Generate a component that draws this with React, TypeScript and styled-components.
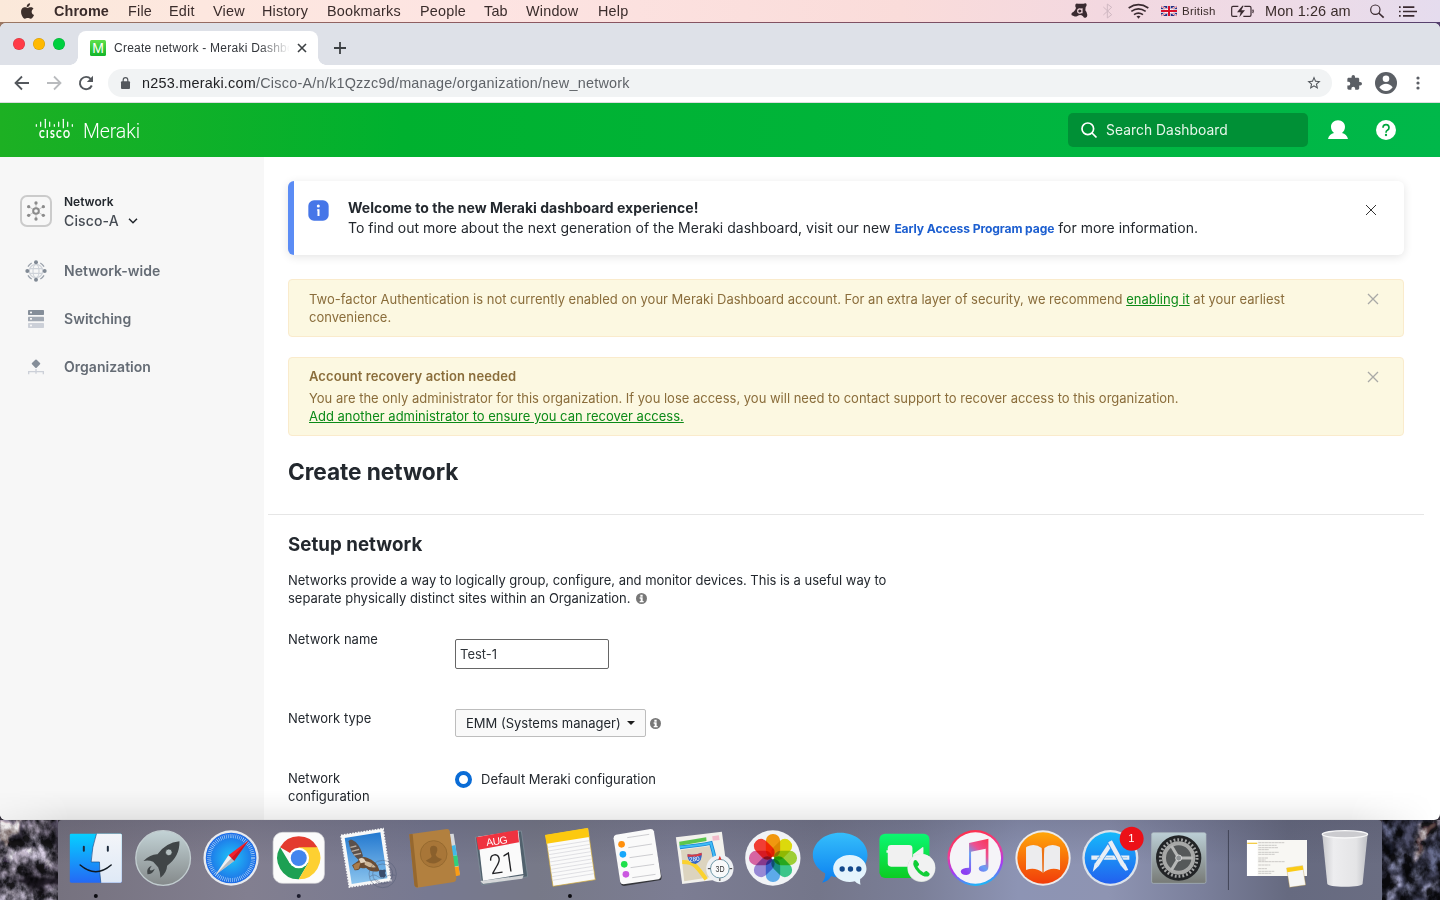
import React from 'react';
import styled, { createGlobalStyle } from 'styled-components';

const Global = createGlobalStyle`
  * { box-sizing: border-box; }
  body { margin: 0; overflow: hidden; background: #3a3440; }
  svg { display: block; overflow: visible; flex: none; }
`;

const sys = `'Liberation Sans', Arial, sans-serif`;

const Desktop = styled.div`
  width: 1440px;
  height: 900px;
  display: flex;
  flex-direction: column;
  background: linear-gradient(90deg, #9a7763, #8a5560 40%, #6e4a66 90%, #54406e) top / 100% 30px no-repeat, #35313b;
  font-family: ${sys};
`;

/* ---------- macOS menu bar ---------- */
const MenuBar = styled.div`
  height: 22px;
  margin-bottom: 1px;
  display: flex;
  align-items: center;
  background: linear-gradient(90deg, #fbe9da 0, #fde7df 200px, #fde4e2 480px, #fadcda 900px, #f3d8e0 1100px, #eddbe7 1300px, #e5dcee 1440px);
  color: #3a2c2b;
`;
const AppleSlot = styled.div`
  width: 54px;
  padding-left: 21px;
`;
const MenuItem = styled.span<{ $w: number; $bold?: boolean }>`
  width: ${(p) => p.$w}px;
  font-size: 14.4px;
  letter-spacing: ${(p) => (p.$bold ? 0.1 : 0.2)}px;
  line-height: 22px;
  white-space: nowrap;
  font-weight: ${(p) => (p.$bold ? 700 : 400)};
`;
const Status = styled.div`
  margin-left: auto;
  width: 369px;
  display: flex;
  align-items: center;
`;
const StatusItem = styled.div<{ $w: number }>`
  width: ${(p) => p.$w}px;
  flex: none;
  white-space: nowrap;
  line-height: 18px;
`;
const Lang = styled.span`
  display: block;
  font-size: 11.5px;
  letter-spacing: 0.25px;
`;
const Clock = styled.span`
  font-size: 14.5px;
  letter-spacing: 0.1px;
`;

/* ---------- Browser window ---------- */
const BrowserWindow = styled.div`
  position: relative;
  height: 797px;
  display: flex;
  flex-direction: column;
  border-radius: 6px;
  overflow: hidden;
  background: #fff;
`;
const DockShade = styled.div`
  position: absolute;
  left: 0;
  right: 0;
  bottom: 0;
  height: 30px;
  background: linear-gradient(180deg, rgba(0, 0, 0, 0), rgba(0, 0, 0, 0.03) 50%, rgba(0, 0, 0, 0.08) 97%, rgba(0, 0, 0, 0.16));
  mask-image: linear-gradient(90deg, rgba(0, 0, 0, 0.3), #000 70px, #000 1350px, transparent 1435px);
`;
const TabStrip = styled.div`
  height: 42px;
  display: flex;
  align-items: flex-end;
  background: #dee1e8;
`;
const Lights = styled.div`
  width: 78px;
  height: 42px;
  display: flex;
  align-items: center;
  gap: 8px;
  padding-left: 13px;
`;
const Light = styled.i<{ $c: string }>`
  width: 12px;
  height: 12px;
  border-radius: 50%;
  background: ${(p) => p.$c};
  box-shadow: inset 0 0 0 0.5px rgba(0, 0, 0, 0.18);
`;
const Tab = styled.div`
  position: relative;
  width: 240px;
  height: 34px;
  padding: 0 10px 0 12px;
  display: flex;
  align-items: center;
  background: #fff;
  border-radius: 8px 8px 0 0;
  &::before, &::after {
    content: '';
    position: absolute;
    bottom: 0;
    width: 8px;
    height: 8px;
  }
  &::before { left: -8px; background: radial-gradient(circle at 0 0, transparent 7.5px, #fff 8px); }
  &::after { right: -8px; background: radial-gradient(circle at 100% 0, transparent 7.5px, #fff 8px); }
`;
const Favicon = styled.div`
  width: 16px;
  height: 16px;
  margin-right: 8px;
  border-radius: 1.5px;
  background: linear-gradient(#5ee04a, #12b52a);
  color: #fff;
  font: 400 14px/16px ${sys};
  text-align: center;
`;
const TabTitle = styled.span`
  width: 175px;
  margin-right: 9px;
  overflow: hidden;
  white-space: nowrap;
  font-size: 12px;
  line-height: 18px;
  letter-spacing: 0.24px;
  color: #33363b;
  mask-image: linear-gradient(90deg, #000 145px, transparent 176px);
`;
const NewTab = styled.div`
  height: 34px;
  padding: 0 0 0 16px;
  display: flex;
  align-items: center;
`;
const Toolbar = styled.div`
  height: 38px;
  display: flex;
  align-items: center;
  padding: 0 18px 2px 14px;
  border-bottom: 1px solid #dcdde0;
  background: #fff;
`;
const NavIcons = styled.div`
  width: 94px;
  display: flex;
  gap: 16px;
`;
const UrlField = styled.div`
  width: 1224px;
  height: 28px;
  border-radius: 14px;
  background: #f1f3f4;
  display: flex;
  align-items: center;
  padding: 0 10px 0 13px;
`;
const Url = styled.span`
  margin-left: 12px;
  flex: 1;
  font-size: 14.4px;
  letter-spacing: 0.24px;
  color: #5f6368;
  b { font-weight: 400; color: #202124; }
`;
const Extensions = styled.div`
  flex: 1;
  display: flex;
  align-items: center;
  padding-left: 15px;
`;
const Avatar = styled.div`
  margin: 0 19px 0 13px;
`;

/* ---------- Meraki header ---------- */
const Header = styled.header`
  height: 54px;
  flex: none;
  display: flex;
  align-items: center;
  padding: 0 44px 0 35px;
  background: linear-gradient(90deg, #1db023, #00b12f 28%, #00b53c 65%, #00b84a);
  color: #fff;
`;
const CiscoLogo = styled.div`
  margin-bottom: 3px;
`;
const Brand = styled.span`
  margin-left: 9px;
  flex: 1;
  font: 300 19.5px/26px Roboto, sans-serif;
  letter-spacing: -0.1px;
  padding-top: 4px;
`;
const SearchBox = styled.div`
  width: 240px;
  height: 34px;
  margin-right: 20px;
  border-radius: 5px;
  background: #009036;
  display: flex;
  align-items: center;
  padding-left: 13px;
  gap: 9px;
  font: 400 13.8px/20px Inter, sans-serif;
  letter-spacing: 0.06px;
  color: #e6f6ea;
`;
const HeaderIcon = styled.div`
  width: 20px;
  margin-right: 28px;
  &:last-child { margin-right: 0; }
`;

/* ---------- Page body ---------- */
const Body = styled.div`
  flex: 1;
  display: flex;
  font-family: Inter, sans-serif;
`;
const Sidebar = styled.nav`
  width: 264px;
  flex: none;
  background: #f7f7f7;
  padding: 35px 0 0 20px;
`;
const OrgPicker = styled.div`
  height: 43px;
  margin-bottom: 12px;
  display: flex;
  gap: 12px;
`;
const OrgIcon = styled.div`
  width: 32px;
  height: 32px;
  margin-top: 3px;
  border: 2px solid #cbcbcb;
  border-radius: 7px;
  display: grid;
  place-items: center;
`;
const OrgLabel = styled.div`
  font-size: 12px;
  font-weight: 600;
  line-height: 20px;
  letter-spacing: -0.03px;
  color: #23282e;
`;
const OrgName = styled.div`
  display: flex;
  align-items: center;
  gap: 9px;
  font-size: 14px;
  font-weight: 500;
  line-height: 18px;
  letter-spacing: 0.15px;
  color: #464c54;
`;
const NavItem = styled.div`
  height: 48px;
  display: flex;
  align-items: center;
  gap: 12px;
  font-size: 14px;
  font-weight: 600;
  line-height: 18px;
  letter-spacing: 0.02px;
  color: #656c75;
`;
const NavIcon = styled.div`
  width: 32px;
  display: grid;
  place-items: center;
`;
const Main = styled.main`
  flex: 1;
  padding: 24px 36px 0 24px;
  color: #23282e;
`;
const Welcome = styled.section`
  height: 74px;
  margin-bottom: 24px;
  display: flex;
  border-radius: 6px;
  overflow: hidden;
  border-left: 6px solid #5b8cf5;
  background: #fff;
  box-shadow: 0 2px 10px rgba(0, 0, 0, 0.11);
  padding: 17px 28px 0 14px;
`;
const InfoSquare = styled.div`
  width: 21px;
  height: 21px;
  margin: 2px 19px 0 0;
`;
const WelcomeText = styled.div`
  flex: 1;
  font-size: 14px;
  line-height: 20px;
  letter-spacing: 0.02px;
  white-space: nowrap;
  strong { display: block; font-weight: 700; letter-spacing: 0.01px; }
  a { font-size: 12.1px; font-weight: 700; letter-spacing: -0.1px; color: #1d5fd0; }
`;
const CloseWrap = styled.div<{ $top: number }>`
  margin-top: ${(p) => p.$top}px;
`;
const Alert = styled.section<{ $h: number; $pad: number }>`
  height: ${(p) => p.$h}px;
  margin-bottom: 20px;
  display: flex;
  padding: ${(p) => p.$pad}px 25px 0 20px;
  border: 1px solid #faebcc;
  border-radius: 4px;
  background: #fcf8e1;
  color: #8a6d3b;
  p {
    flex: 1;
    margin: 0;
    font-size: 13px;
    line-height: 18px;
    letter-spacing: -0.005px;
    white-space: nowrap;
  }
  strong { display: block; margin-bottom: 4px; font-weight: 600; letter-spacing: 0.08px; }
  a { color: #0b8a17; text-decoration: underline; }
`;
const PageTitle = styled.h1`
  margin: 21px 0 27px;
  font-size: 22.7px;
  line-height: 30px;
  font-weight: 700;
  letter-spacing: -0.08px;
`;
const Rule = styled.hr`
  margin: 0 -20px 0;
  border: 0;
  height: 1px;
  background: #e6e6e6;
`;
const SectionTitle = styled.h2`
  margin: 17px 0 13px;
  font-size: 18.7px;
  line-height: 26px;
  font-weight: 700;
  letter-spacing: 0.03px;
`;
const Copy = styled.p`
  margin: 0;
  height: 59px;
  font-size: 13px;
  line-height: 18px;
  letter-spacing: -0.02px;
  white-space: nowrap;
  svg { display: inline-block; vertical-align: -1px; margin-left: 2px; }
`;
const FieldRow = styled.div<{ $h: number }>`
  height: ${(p) => p.$h}px;
  display: flex;
  font-size: 13px;
  line-height: 18px;
  letter-spacing: 0;
`;
const FieldLabel = styled.label`
  width: 167px;
`;
const TextInput = styled.input`
  width: 154px;
  height: 30px;
  margin-top: 9px;
  padding: 2px 4px;
  border: 1px solid #666;
  border-radius: 2px;
  font: 400 13px Inter, sans-serif;
  letter-spacing: 0;
  color: #2e3338;
`;
const SelectButton = styled.button`
  width: 191px;
  height: 28px;
  display: flex;
  align-items: center;
  justify-content: space-between;
  padding: 0 10px;
  border: 1px solid #bdbdbd;
  border-radius: 2px;
  background: #f9f9f9;
  font: 400 13px Inter, sans-serif;
  letter-spacing: 0;
  white-space: nowrap;
  color: #23282e;
`;
const InfoSlot = styled.div`
  margin: 9px 0 0 3.5px;
`;
const RadioOption = styled.div`
  height: 20px;
  display: flex;
  align-items: center;
  gap: 9px;
`;
const Radio = styled.i`
  width: 17px;
  height: 17px;
  border: 4.5px solid #0a6cd6;
  border-radius: 50%;
`;

/* ---------- Dock ---------- */
const DockRow = styled.div`
  height: 80px;
  display: flex;
`;
const DockBar = styled.div`
  width: 1324px;
  padding-left: 4.15px;
  display: flex;
  border-radius: 4px 4px 0 0;
  background:
    linear-gradient(180deg, rgba(70, 70, 90, 0.25), rgba(70, 70, 90, 0) 45px),
    linear-gradient(90deg, #76727f, #827f90 190px, #777991 370px, #777988 480px, #7c7d93 620px, #74768a 760px, #7b7f98 860px, #8d94b4 960px, #8e94b2 1050px, #7b809c 1140px, #666a80 1230px, #6a6d82);
`;

const cross = (s: number, c: string, w: number) => (
  <svg width={s} height={s} viewBox="0 0 10 10" stroke={c} strokeWidth={w}>
    <path d="M0 0L10 10M10 0L0 10" />
  </svg>
);

const InfoDot = () => (
  <svg width="11" height="11" viewBox="0 0 33 33">
    <circle cx="16.5" cy="16.5" r="16.5" fill="#777" />
    <path d="M13 5h7v6h-7zM11 13h9v11h3v4H11v-4h3v-7h-3z" fill="#fff" />
  </svg>
);

const Rocks = ({ flip }: { flip?: boolean }) => {
  const k = flip ? 'R' : 'L';
  return (
    <svg width="58" height="80" viewBox="0 0 58 80">
      <defs>
        <clipPath id={`rock${k}`}><rect width="58" height="80" /></clipPath>
        <filter id={`rough${k}`} x="-10%" y="-10%" width="120%" height="120%" colorInterpolationFilters="sRGB">
          <feTurbulence type="fractalNoise" baseFrequency="0.08" numOctaves="4" seed={flip ? 8 : 3} />
          <feDisplacementMap in="SourceGraphic" scale="18" xChannelSelector="R" yChannelSelector="G" />
          <feGaussianBlur stdDeviation="0.8" />
        </filter>
        <filter id={`grain${k}`} x="0" y="0" width="100%" height="100%" colorInterpolationFilters="sRGB">
          <feTurbulence type="fractalNoise" baseFrequency="0.09 0.07" numOctaves="4" seed={flip ? 12 : 5} />
          <feColorMatrix values="2.2 0 0 0 -0.68  2.2 0 0 0 -0.68  2.2 0 0 0 -0.66  0 0 0 0 1" />
        </filter>
      </defs>
      <g clipPath={`url(#rock${k})`}>
        {flip ? (
          <g>
            <rect width="58" height="80" fill="#2b2c3a" />
            <g filter="url(#roughR)">
              <path d="M39 0h18L46 18 38 40 28 48 32 20z" fill="#77717a" />
              <path d="M44 4l8 0-12 20-4 14-3-4 4-18z" fill="#a69a98" />
              <path d="M0 8l14-5 6 14-12 6zM48 28l14-14v30l-16 12z" fill="#3b3e50" />
              <path d="M4 38l16-10 8 6-18 20zM24 60l20-18-8 24-18 14z" fill="#484a5b" />
              <path d="M10 60l10-4-6 18-8 4zM42 70l18-16-2 10-12 14zM52 6l6 4-8 12z" fill="#5f6072" />
              <path d="M4 24l12 4-8 10zM26 46l8-2-12 22z" fill="#151722" />
            </g>
          </g>
        ) : (
          <g>
            <rect width="58" height="80" fill="#544e59" />
            <g filter="url(#roughL)">
              <path d="M0 0h20l-2 14L8 26 0 22z" fill="#a59a96" />
              <path d="M24 2l24-4-6 18-18 6zM0 28l20-6 14 10-14 22-20 2z" fill="#6a646d" />
              <path d="M24 18l18 2 14 14-24 14z" fill="#7b7680" />
              <path d="M8 30l8 2-6 16-7-2zM30 26l8 4-8 10z" fill="#8a848e" />
              <path d="M18 58l20-4 24-2v12l-30 6-12-4z" fill="#141117" />
              <path d="M0 58l24 8 14 10 24-8v18H0z" fill="#77727c" />
              <path d="M52 0h12v32l-10-6zM20 2l6 4-8 18-4-4z" fill="#2e2a34" />
              <path d="M6 70l12 2-4 6zM42 42l10-6 6 10-12 4z" fill="#857f88" />
            </g>
          </g>
        )}
        <rect width="58" height="80" filter={`url(#grain${k})`} style={{ mixBlendMode: 'overlay' }} opacity=".8" />
      </g>
    </svg>
  );
};

const DockIcon = ({ x, children }: { x: number; children: React.ReactNode }) => (
  <svg width="67.7" height="80" viewBox={`${x} 30 203.1 240`}>{children}</svg>
);

const range = (n: number) => Array.from({ length: n }, (_, i) => i);

const Gradient = ({ id, from, to }: { id: string; from: string; to: string }) => (
  <linearGradient id={id} x1="0" y1="0" x2="0" y2="1">
    <stop offset="0" stopColor={from} />
    <stop offset="1" stopColor={to} />
  </linearGradient>
);

const petals = ['#ff9f0f', '#e9e40c', '#a6d837', '#3fcf8f', '#62b3f2', '#a090dd', '#e36aa8', '#ff4136'];

const Dock = () => (
  <DockBar>
    {/* Finder */}
    <DockIcon x={186.5}>
      <defs><Gradient id="fdL" from="#06d0ff" to="#2469f5" /><Gradient id="fdR" from="#f3f5f9" to="#dfe9f6" /></defs>
      <rect x="210" y="71" width="156" height="147" rx="4" fill="url(#fdL)" />
      <path d="M290 71H362a4 4 0 014 4V214a4 4 0 01-4 4H303q-4-30-4-62H274q2-45 16-85z" fill="url(#fdR)" />
      <path d="M290 71q-14 40-16 85h25q0 32 4 62" fill="none" stroke="#174a86" strokeWidth="2" />
      <path d="M252 110v12M324 110v12" stroke="#1d2b3c" strokeWidth="6" strokeLinecap="round" />
      <path d="M241 165q47 40 93 0" fill="none" stroke="#101820" strokeWidth="4.5" strokeLinecap="round" />
      <circle cx="288" cy="258" r="6" fill="#0b0b10" />
    </DockIcon>
    {/* Launchpad */}
    <DockIcon x={389.6}>
      <defs><Gradient id="lp" from="#c3d3d6" to="#84898a" /></defs>
      <circle cx="489" cy="144" r="82" fill="url(#lp)" stroke="#c2cdd0" strokeWidth="4" />
      <path d="M538 94Q497 98 472 133Q452 132 430 153Q445 150 459 155L474 172Q480 184 481 203Q500 188 501 167Q539 140 538 94z" fill="#404547" />
      <path d="M455 167q-18 6-13 26q16 0 22-17q-10 8-15 4q0-6 6-13z" fill="#404547" />
      <circle cx="506" cy="127" r="10" fill="#b4bfc0" stroke="#2e3335" strokeWidth="2" />
    </DockIcon>
    {/* Safari */}
    <DockIcon x={592.7}>
      <defs><radialGradient id="sf"><stop offset="0" stopColor="#1fc4f8" /><stop offset="1" stopColor="#1e6be6" /></radialGradient></defs>
      <circle cx="692" cy="144" r="83" fill="#e9ebee" />
      <circle cx="692" cy="144" r="76" fill="url(#sf)" />
      <circle cx="692" cy="144" r="66" fill="none" stroke="#d6ecfc" strokeWidth="12" strokeDasharray="1.5 4.26" />
      <path d="M745 91L684 136L701 153z" fill="#f2222c" />
      <path d="M701 153L684 136L645 195z" fill="#f0f0f3" />
      <path d="M745 91L692.500 144.500L701 153z" fill="#a30d16" opacity=".5" />
      <path d="M645 195L692.500 144.500L701 153z" fill="#8b9097" opacity=".55" />
    </DockIcon>
    {/* Chrome */}
    <DockIcon x={-14.3}>
      <rect x="10" y="67" width="154" height="153" rx="28" fill="#fbfbfb" stroke="#d5d5d8" strokeWidth="2" />
      <path d="M87 144L31 112A64 64 0 01143 112z" fill="#e33b2e" />
      <path d="M31 112A64 64 0 0087 208L115 160L87 144L60 160z" fill="#1da053" />
      <path d="M87 208A64 64 0 00143 112H87V144L115 160z" fill="#fdd031" />
      <circle cx="87" cy="144" r="31" fill="#fff" />
      <circle cx="87" cy="144" r="24" fill="#4285ee" />
      <circle cx="87" cy="258" r="6" fill="#1b1b2c" />
    </DockIcon>
    {/* Mail */}
    <DockIcon x={188.9}>
      <defs><Gradient id="ml" from="#2378cf" to="#8cc5ee" /></defs>
      <path d="M213 76L339 56L362 212L238 231z" fill="#f8f8f8" stroke="#f8f8f8" strokeWidth="5" strokeDasharray="5 3.5" />
      <path d="M224 84L331 67L352 205L245 222z" fill="url(#ml)" />
      <path d="M236 94Q240 86 247 90L257 96Q273 112 279 139L266 150Q240 132 236 94z" fill="#5b504b" />
      <path d="M241 112l18-4M245 124l22-6M251 135l22-5" stroke="#b9ada2" strokeWidth="4" />
      <path d="M246 166L264 153Q272 137 291 143Q320 152 329 182Q305 190 288 173Q280 176 272 173Q266 182 254 181z" fill="#6b4c32" />
      <path d="M250 166q10-8 22-10l-6 20-12 3z" fill="#a97b4a" />
      <path d="M284 154Q300 152 318 172Q297 174 284 164z" fill="#cdb698" />
      <path d="M266 147q8-5 16-1l6 10-16 4z" fill="#e3d3bd" />
      <g fill="none" stroke="#4e5871" opacity=".5" strokeWidth="2.500">
        <circle cx="338" cy="192" r="41" /><circle cx="338" cy="192" r="30" />
        <path d="M300 200q12-10 24 0t24 0 28-4M302 214q12-10 24 0t24 0" />
      </g>
      <path d="M327 188q-2-12 10-8 12-4 10 4-5 6 1 12-5 10-11 6-9 3-10-14z" fill="#3a4c6c" />
    </DockIcon>
    {/* Contacts */}
    <DockIcon x={392}>
      <path d="M538 72l12-1 18 122-14 6z" fill="#d6dade" />
      <path d="M542 108l13-3 5 30-13 3z" fill="#42b8e8" />
      <path d="M546 138l15-2 4 31-14 3z" fill="#30d07c" />
      <path d="M550 172l15-3 4 27-14 3z" fill="#fb9d14" />
      <path d="M417 73L530 57Q537 57 538 64L558 205Q558 214 551 216L440 233Q433 231 432 224z" fill="#b2803f" />
      <path d="M417 73L427 72L443 232Q433 232 432 224z" fill="#96682f" />
      <circle cx="490" cy="132" r="40" fill="#a87638" stroke="#96692f" strokeWidth="3" />
      <path d="M479 117q1-11 12-10 11 1 10 14-2 9-5 13 2 8 19 13-23 24-49 5 17-8 18-13-5-9-5-22z" fill="#8a602c" />
    </DockIcon>
    {/* Calendar */}
    <DockIcon x={595}>
      <path d="M617 82L755 63L774 200L637 225z" fill="#51616d" stroke="#8796a0" strokeWidth="2" />
      <path d="M632 213L762 196L758 206L640 222z" fill="#d6d8da" />
      <path d="M625 80L746 62L761 192L640 212z" fill="#fafafa" />
      <path d="M620 82L744 60L748 97L626 119z" fill="#ef3340" />
      <g transform="rotate(-8 690 130)" textAnchor="middle">
        <text x="687" y="103" fontFamily="Liberation Sans" fontSize="31" fill="#fff" textLength="64">AUG</text>
        <text x="694" y="189" fontFamily="Roboto" fontSize="82" fontWeight="300" fill="#202124" textLength="78" lengthAdjust="spacingAndGlyphs">21</text>
      </g>
    </DockIcon>
    {/* Notes */}
    <DockIcon x={-11.9}>
      <path d="M17 76L144 55L166 209L39 229z" fill="#fafafa" stroke="#d1a72e" strokeWidth="2" />
      <path d="M15 75L143 54L148 81L20 101z" fill="#fcc90f" />
      <g stroke="#d2d2d8" strokeWidth="2">{range(10).map((i) => <path key={i} d={`M${23 + i * 1.6} ${112 + i * 11}l125 -20`} />)}</g>
      <circle cx="90" cy="258" r="6" fill="#0b0b10" />
    </DockIcon>
    {/* Reminders */}
    <DockIcon x={191.3}>
      <path d="M222 84L337 62L364 200Q365 209 357 211L251 228Q243 228 241 220z" fill="#35363b" />
      <path d="M220 85Q220 76 227 74L331 57Q339 57 341 64L362 198Q362 206 355 208L250 223Q242 223 240 216z" fill="#fafafa" />
      <g stroke="#b5b5bb" strokeWidth="2"><path d="M261 83l66-10M264 113l71-11M268 143l70-10M271 173l71-10M276 203l70-10" /></g>
      <circle cx="244" cy="103" r="10" fill="#ff8f0c" /><circle cx="248" cy="133" r="10" fill="#16a7fb" />
      <circle cx="252" cy="163" r="10" fill="#1ee04b" /><circle cx="257" cy="193" r="10" fill="#cb58e0" />
    </DockIcon>
    {/* Maps */}
    <DockIcon x={394.4}>
      <path d="M409 82L547 65L566 205L428 222z" fill="#f2f1ec" />
      <path d="M419 95L500 82L501 93L420 107z" fill="#5bc64d" />
      <path d="M518 79l20-3 2 14-20 2z" fill="#f3bccb" />
      <path d="M424 120l88-12 22 90-100 16z" fill="#dcd4bf" />
      <path d="M421 112Q480 106 514 99Q521 122 527 150" fill="none" stroke="#1786d4" strokeWidth="11" />
      <path d="M421 112Q480 106 514 99Q521 122 527 150" fill="none" stroke="#40bdf6" strokeWidth="6" />
      <path d="M428 156Q456 156 468 168T500 208" fill="none" stroke="#fbd22f" strokeWidth="12" />
      <path d="M444 133q22 4 42-5 5 24-18 34-25-3-24-29z" fill="#3769c8" />
      <path d="M444 133q22 4 42-5l1 8q-20 6-43 4z" fill="#d83b43" />
      <text x="449" y="155" fontFamily="Liberation Sans" fontSize="19" fill="#fff" transform="rotate(-5 449 155)">280</text>
      <circle cx="541" cy="176" r="41" fill="#eef0f3" /><circle cx="541" cy="176" r="28" fill="#f8f9fa" stroke="#6e99a9" strokeWidth="3" />
      <path d="M541 137l5 12h-10z" fill="#e6362c" /><path d="M505 176h8M570 176h8M541 205v8" stroke="#333" strokeWidth="3" />
      <text x="528" y="185" fontFamily="Liberation Sans" fontSize="25" textLength="27" lengthAdjust="spacingAndGlyphs" fill="#333">3D</text>
    </DockIcon>
    {/* Photos */}
    <DockIcon x={597.5}>
      <circle cx="699" cy="144" r="83" fill="#f1f3f6" />
      {petals.map((c, i) => (
        <rect key={c} x="678" y="72" width="43" height="70" rx="21" fill={c} transform={`rotate(${i * 45} 699.5 144)`} style={{ mixBlendMode: 'multiply' }} />
      ))}
      <circle cx="699" cy="144" r="4" fill="#fff" />
    </DockIcon>
    {/* Messages */}
    <DockIcon x={-9.5}>
      <defs><Gradient id="ms" from="#35befb" to="#0b7ff0" /></defs>
      <path d="M90 68c46 0 82 30 82 67s-36 67-82 67c-10 0-19-1-27-4q-9 17-27 20 10-12 9-28C22 178 8 158 8 135c0-37 36-67 82-67z" fill="url(#ms)" />
      <path d="M119 135c28 0 50 18 50 41 0 13-8 24-19 31q-1 10 1 17-11-2-17-10-7 2-15 2c-28 0-50-18-50-40s22-41 50-41z" fill="#e4f4fd" />
      <g fill="#13488b"><circle cx="96" cy="177" r="8" /><circle cx="121" cy="177" r="8" /><circle cx="146" cy="177" r="8" /></g>
    </DockIcon>
    {/* FaceTime */}
    <DockIcon x={193.7}>
      <defs><Gradient id="ft" from="#0bf772" to="#0ccc23" /></defs>
      <rect x="210" y="71" width="150" height="133" rx="17" fill="url(#ft)" />
      <rect x="235" y="105" width="74" height="65" rx="10" fill="#f1f1f1" />
      <path d="M311 133l29-22q2-1 2 3v52l-31-20zM231 121h5v7h-5z" fill="#f1f1f1" />
      <circle cx="336" cy="174" r="42" fill="#d4dcd7" /><circle cx="336" cy="173" r="41" fill="#f1f2f2" />
      <path d="M313 153q5-6 10 0l6 9q1 4-5 8 7 12 19 18 4-6 9-5l8 7q3 5-3 9-13 4-30-11-20-20-14-35z" fill="#10ce37" />
    </DockIcon>
    {/* iTunes */}
    <DockIcon x={396.8}>
      <defs>
        <linearGradient id="itR" x1=".3" y1="0" x2=".5" y2="1"><stop offset="0" stopColor="#ff2d45" /><stop offset=".38" stopColor="#f23d90" /><stop offset=".7" stopColor="#a73af3" /><stop offset="1" stopColor="#19b8f8" /></linearGradient>
        <linearGradient id="itN" x1="1" y1="0" x2=".3" y2="1"><stop offset="0" stopColor="#fa3454" /><stop offset=".35" stopColor="#ee4f90" /><stop offset=".6" stopColor="#65a0f5" /><stop offset="1" stopColor="#8d3ff2" /></linearGradient>
      </defs>
      <circle cx="497" cy="144" r="84" fill="url(#itR)" /><circle cx="497" cy="144" r="77" fill="#f5f4f8" />
      <path d="M478 99L536 86V170Q536 184 522 185Q507 185 507 175Q508 166 528 164V116L484 125V180Q484 194 470 195Q453 195 453 184Q455 173 478 173z" fill="url(#itN)" />
    </DockIcon>
    {/* iBooks */}
    <DockIcon x={599.9}>
      <defs><Gradient id="ib" from="#ffa60a" to="#f13d0a" /></defs>
      <circle cx="699" cy="144" r="83" fill="#ebebec" /><circle cx="699" cy="144" r="77" fill="url(#ib)" />
      <path d="M695 114Q674 98 650 110Q648 111 648 114V180Q675 170 699 188Q723 170 750 180V114Q750 111 748 110Q723 98 703 114L699 188z" fill="#ececee" />
      <path d="M699 113V188" stroke="#e6701b" strokeWidth="4" />
    </DockIcon>
    {/* App Store */}
    <DockIcon x={-7}>
      <defs><Gradient id="as" from="#16b9fb" to="#2260ee" /></defs>
      <circle cx="93" cy="144" r="84" fill="#dce2ea" /><circle cx="93" cy="144" r="77" fill="url(#as)" />
      <g stroke="#e9eff6" fill="none"><path d="M36 143h114" strokeWidth="13" /><path d="M97 97L52 165" stroke="#2f8fee" strokeWidth="17" /><path d="M97 97L52 165" strokeWidth="13" /><path d="M92 96L131 165" stroke="#2f8fee" strokeWidth="17" /><path d="M92 94L131 165" strokeWidth="13" /></g>
      <path d="M46 160l12 8-18 18zM125 167l12-7 10 20-9 2z" fill="#e9eff6" />
      <path d="M53 143h10M78 143h22M124 143h20" stroke="#7eb9e6" strokeWidth="2" />
      <circle cx="157" cy="86" r="36" fill="#ec1018" />
      <text x="156" y="97" fontFamily="Liberation Sans" fontSize="34" textAnchor="middle" fill="#fff">1</text>
    </DockIcon>
    {/* System Preferences */}
    <DockIcon x={196}>
      <defs><Gradient id="sp" from="#bccfd6" to="#777a76" /></defs>
      <rect x="216" y="68" width="163" height="152" rx="5" fill="url(#sp)" stroke="#aebbc0" strokeWidth="2" />
      <circle cx="297" cy="144" r="68" fill="#222426" />
      <circle cx="297" cy="144" r="55" fill="none" stroke="#a3a4a4" strokeWidth="9" strokeDasharray="5.5 6.02" />
      <circle cx="297" cy="144" r="44" fill="#555859" stroke="#a7a8a7" strokeWidth="12" />
      <path d="M297 144L275 107M297 144h43M297 144l-22 37" stroke="#b6b7b6" strokeWidth="9" />
      <circle cx="297" cy="144" r="9" fill="#8f9395" stroke="#d1d1d1" strokeWidth="3" />
    </DockIcon>
    {/* Separator, minimised window and Trash */}
    <svg width="168.95" height="80" viewBox="399.2 30 506.8 240">
      <defs><linearGradient id="tr"><stop offset="0" stopColor="#c9c9cd" /><stop offset=".25" stopColor="#ededef" /><stop offset=".75" stopColor="#e4e4e6" /><stop offset="1" stopColor="#bfc0c5" /></linearGradient></defs>
      <path d="M445.5 60V240" stroke="#414557" strokeWidth="3" />
      <rect x="501" y="90" width="180" height="108" fill="#fff" />
      <rect x="533" y="90" width="148" height="108" fill="#f8f7f3" />
      <rect x="502" y="98" width="30" height="4" fill="#f3cd4a" />
      <g stroke="#b5b4b1" strokeWidth="2">
        <path d="M535 98h78M535 106h55M535 113h60M535 119h32M535 127h62M535 133h50M535 144h30M535 150h22M535 155h80M535 165h36M535 176h26M535 184h48M535 190h40" strokeDasharray="9 1" />
      </g>
      <path d="M620 174l48-7 9 58-48 7z" fill="#f5f5f5" stroke="#b89130" strokeWidth="1" />
      <path d="M620 174l48-7 2 12-48 8z" fill="#fbcb16" />
      <path d="M727 73L742 221Q745 230 795 230Q845 230 848 221L863 73z" fill="url(#tr)" />
      <ellipse cx="795" cy="73" rx="68" ry="11" fill="#cbcbcf" stroke="#f7f7f8" strokeWidth="4" />
    </svg>
  </DockBar>
);

const menus: [string, number][] = [['File', 41], ['Edit', 44], ['View', 49], ['History', 65], ['Bookmarks', 93], ['People', 64], ['Tab', 42], ['Window', 72], ['Help', 40]];

const ciscoBars: [number, number, number][] = [[110, 373, 378], [123, 365, 378], [137, 357, 382], [150, 365, 378], [164, 373, 378], [177, 365, 378], [191, 357, 382], [204, 365, 378], [218, 373, 378]];

export default function App() {
  return (
    <Desktop>
      <Global />
      <MenuBar>
        <AppleSlot>
          <svg width="13.5" height="16" viewBox="0 0 40 48" fill="#3d302c">
            <path d="M27 1c1 6-5 12-10 11C16 6 22 1 27 1zM37 17c-8 5-6 16 2 19-3 7-7 11-10 11-4 0-5-2-9-2s-5 2-9 2C6 46 0 36 0 27c0-10 6-14 12-14 3 0 6 2 8 2s6-3 10-2c3 0 6 2 7 4z" />
          </svg>
        </AppleSlot>
        <MenuItem $w={74} $bold>Chrome</MenuItem>
        {menus.map(([t, w]) => <MenuItem key={t} $w={w}>{t}</MenuItem>)}
        <Status>
          <StatusItem $w={32}>
            <svg width="16" height="16" viewBox="93 8 48 48">
              <path d="M106 13q2-4 7-3h18q8-3 9 3 0 4-3 7l-1 10q5 5 6 14 0 6-5 8-5 2-8-4-4-4-9-4-6 1-9 4-5 2-10-1-8-2-7-6 1-4 6-6 6-4 8-12-3-5-2-10z" fill="#3a2a30" />
              <path d="M126 24v15M126 32a6.500 6.500 0 10-13 0 6.500 6.500 0 0013 0" fill="none" stroke="#f1d6dc" strokeWidth="3.5" />
            </svg>
          </StatusItem>
          <StatusItem $w={25}>
            <svg width="9" height="16" viewBox="0 0 27 46" fill="none" stroke="#d0b8c2" strokeWidth="3"><path d="M1 11l25 23-13 10V2l13 10L1 35" /></svg>
          </StatusItem>
          <StatusItem $w={33}>
            <svg width="21" height="15" viewBox="0 0 63 45" fill="none" stroke="#3a2a30" strokeWidth="5"><path d="M2 12q29-20 59 0M10 22q21-15 43 0M18 32q13-9 27 0" /><path d="M31.500 44l-6-7q6-4 12 0z" fill="#3a2a30" stroke="none" /></svg>
          </StatusItem>
          <StatusItem $w={21}>
            <svg width="16" height="10" viewBox="0 0 48 30">
              <rect width="48" height="30" fill="#262f83" />
              <path d="M0 0l48 30M48 0L0 30" stroke="#fff" strokeWidth="6" /><path d="M0 0l48 30M48 0L0 30" stroke="#d8233d" strokeWidth="2" />
              <path d="M24 0v30M0 15h48" stroke="#fff" strokeWidth="10" /><path d="M24 0v30M0 15h48" stroke="#d8102c" strokeWidth="6" />
            </svg>
          </StatusItem>
          <StatusItem $w={49}><Lang>British</Lang></StatusItem>
          <StatusItem $w={34}>
            <svg width="23" height="13" viewBox="0 0 69 39" fill="none" stroke="#3a2a30" strokeWidth="3.5">
              <path d="M22 4H6q-4 0-4 4v22q0 4 4 4h13M40 4h16q4 0 4 4v22q0 4-4 4H37" />
              <path d="M34 2L18 22h11l-4 15 17-21H31l7-14z" fill="#3a2a30" stroke="none" /><path d="M65 14q4 5 0 10" strokeWidth="4" />
            </svg>
          </StatusItem>
          <StatusItem $w={105}><Clock>Mon 1:26 am</Clock></StatusItem>
          <StatusItem $w={29}>
            <svg width="14" height="14" viewBox="0 0 42 42" fill="none" stroke="#3a2a30" strokeWidth="3.500"><circle cx="16" cy="17" r="14" /><path d="M26 27l15 14" strokeWidth="5" /></svg>
          </StatusItem>
          <StatusItem $w={18}>
            <svg width="18" height="11" viewBox="0 0 54 33" stroke="#3a2a30" strokeWidth="5"><path d="M0 3.500h5M12 3.500h34M0 16.500h5M12 16.500h42M0 29.500h5M12 29.500h34" /></svg>
          </StatusItem>
        </Status>
      </MenuBar>

      <BrowserWindow>
        <TabStrip>
          <Lights><Light $c="#ff3b47" /><Light $c="#ffb900" /><Light $c="#00d03f" /></Lights>
          <Tab>
            <Favicon>M</Favicon>
            <TabTitle>Create network - Meraki Dashboard</TabTitle>
            {cross(8, '#3c4043', 2)}
          </Tab>
          <NewTab><svg width="12" height="12" viewBox="0 0 12 12" stroke="#3c4043" strokeWidth="1.800"><path d="M6 0v12M0 6h12" /></svg></NewTab>
        </TabStrip>
        <Toolbar>
          <NavIcons>
            <svg width="16" height="16" viewBox="0 0 16 16" fill="none" stroke="#54585d" strokeWidth="1.800"><path d="M8 1.500L1.500 8 8 14.500M1.500 8H15" /></svg>
            <svg width="16" height="16" viewBox="0 0 16 16" fill="none" stroke="#b9bbbe" strokeWidth="1.800"><path d="M8 1.500L14.500 8 8 14.500M14.500 8H1" /></svg>
            <svg width="16" height="16" viewBox="0 0 16 16"><path d="M13.800 10.500A6.200 6.200 0 1112.800 4" fill="none" stroke="#54585d" strokeWidth="1.900" /><path d="M15 .8V7H8.800z" fill="#54585d" /></svg>
          </NavIcons>
          <UrlField>
            <svg width="9" height="12" viewBox="0 0 9 12"><rect y="4.200" width="9" height="7.800" rx="1" fill="#54585d" /><path d="M2.200 5V3a2.300 2.300 0 014.600 0v2" fill="none" stroke="#54585d" strokeWidth="1.200" /></svg>
            <Url><b>n253.meraki.com</b>/Cisco-A/n/k1Qzzc9d/manage/organization/new_network</Url>
            <svg width="16" height="16" viewBox="0 0 24 24" fill="#54585d"><path d="M22 9.240l-7.190-.62L12 2 9.190 8.630 2 9.240l5.460 4.730L5.820 21 12 17.270 18.180 21l-1.630-7.030L22 9.240zM12 15.400l-3.760 2.270 1-4.280-3.320-2.880 4.380-.38L12 6.100l1.710 4.040 4.380.38-3.320 2.880 1 4.280L12 15.400z" /></svg>
          </UrlField>
          <Extensions>
            <svg width="15" height="15" viewBox="1.500 1 21.500 21.500" fill="#5b5f65"><path d="M20.500 11H19V7c0-1.100-.9-2-2-2h-4V3.500a2.500 2.500 0 00-5 0V5H4c-1.100 0-2 .9-2 2v3.800h1.500a2.700 2.700 0 010 5.400H2V20c0 1.100.9 2 2 2h3.800v-1.500a2.700 2.700 0 015.400 0V22H17c1.100 0 2-.9 2-2v-4h1.500a2.500 2.500 0 000-5z" /></svg>
            <Avatar>
              <svg width="22" height="22" viewBox="0 0 22 22"><circle cx="11" cy="11" r="11" fill="#5b5f65" /><circle cx="11" cy="6.700" r="3.300" fill="#fff" /><path d="M4.300 15.300Q7 11.800 11 11.800t6.700 3.500Q15.200 19 11 19t-6.700-3.700z" fill="#fff" /></svg>
            </Avatar>
            <svg width="4" height="14" viewBox="0 0 4 14" fill="#5b5f65"><circle cx="2" cy="2" r="1.600" /><circle cx="2" cy="7" r="1.600" /><circle cx="2" cy="12" r="1.600" /></svg>
          </Extensions>
        </Toolbar>

        <Header>
          <CiscoLogo>
            <svg width="39" height="22" viewBox="106 353 117 66">
              <g stroke="#fff" strokeWidth="3.600" strokeLinecap="round">{ciscoBars.map(([x, a, b]) => <path key={x} d={`M${x} ${a}V${b}`} />)}</g>
              <text x="118" y="414" fontFamily="Lato" fontWeight="900" fontSize="33" letterSpacing="5" textLength="97" lengthAdjust="spacingAndGlyphs" fill="#fff">CISCO</text>
            </svg>
          </CiscoLogo>
          <Brand>Meraki</Brand>
          <SearchBox>
            <svg width="16" height="16" viewBox="0 0 16 16" fill="none" stroke="#fff" strokeWidth="1.700"><circle cx="6.800" cy="6.800" r="5.800" /><path d="M11 11l4.500 4.500" /></svg>
            Search Dashboard
          </SearchBox>
          <HeaderIcon>
            <svg width="20" height="20" viewBox="0 0 60 60" fill="#fff"><path d="M30 1c13 0 21 9 21 20 0 8-4 14-9 18 9 2 16 8 18 18H0c2-10 9-16 18-18-5-4-9-10-9-18C9 10 17 1 30 1z" /></svg>
          </HeaderIcon>
          <HeaderIcon>
            <svg width="20" height="20" viewBox="0 0 60 60"><circle cx="30" cy="30" r="30" fill="#fff" /><path d="M21 23q0-9 9-9t9 9q0 5-5 8-4 2-4 7" fill="none" stroke="#00a63e" strokeWidth="5" /><circle cx="30" cy="45" r="3.500" fill="#00a63e" /></svg>
          </HeaderIcon>
        </Header>

        <Body>
          <Sidebar>
            <OrgPicker>
              <OrgIcon>
                <svg width="20" height="20" viewBox="0 0 60 60" stroke="#b9b9b9" strokeWidth="2.500">
                  <path d="M30 6v48M8 17l44 26M52 17L8 43" />
                  <g fill="#8b8b8b" stroke="none"><circle cx="30" cy="6" r="5" /><circle cx="30" cy="54" r="5" /><circle cx="8" cy="17" r="5" /><circle cx="52" cy="17" r="5" /><circle cx="8" cy="43" r="5" /><circle cx="52" cy="43" r="5" /></g>
                  <circle cx="30" cy="30" r="8.500" fill="#f7f7f7" stroke="#8b8b8b" strokeWidth="6" />
                </svg>
              </OrgIcon>
              <div>
                <OrgLabel>Network</OrgLabel>
                <OrgName>Cisco-A<svg width="10" height="6" viewBox="0 0 10 6" fill="none" stroke="#23282e" strokeWidth="1.500"><path d="M1 .8l4 4 4-4" /></svg></OrgName>
              </div>
            </OrgPicker>
            <NavItem>
              <NavIcon>
                <svg width="22" height="22" viewBox="0 0 66 66" fill="none">
                  <g stroke="#cfd3d9" strokeWidth="3.500"><circle cx="33" cy="33" r="20" /><ellipse cx="33" cy="33" rx="9" ry="20" /><path d="M14 26h38M14 40h38" /></g>
                  <path d="M9 20q4-7 11-11M46 9q7 4 11 11M57 46q-4 7-11 11M20 57q-7-4-11-11" stroke="#9aa1ab" strokeWidth="4" />
                  <g fill="#808994"><circle cx="33" cy="7" r="6" /><circle cx="33" cy="59" r="6" /><circle cx="7" cy="33" r="6" /><circle cx="59" cy="33" r="6" /></g>
                </svg>
              </NavIcon>
              <span>Network-wide</span>
            </NavItem>
            <NavItem>
              <NavIcon>
                <svg width="16" height="18" viewBox="0 0 48 54"><rect width="48" height="15" rx="2" fill="#858e99" /><rect y="20" width="48" height="14" rx="2" fill="#a3aab4" /><rect y="39" width="48" height="15" rx="2" fill="#ccd0d8" /><g fill="#f7f7f7"><rect x="6" y="5" width="6" height="5" /><rect x="6" y="24" width="6" height="5" /><rect x="6" y="44" width="6" height="5" /></g></svg>
              </NavIcon>
              <span>Switching</span>
            </NavItem>
            <NavItem>
              <NavIcon>
                <svg width="16" height="16" viewBox="0 0 48 48"><path d="M24 30v14M2 46v-8h44v8" fill="none" stroke="#ccd0d8" strokeWidth="4" /><path d="M22 2q2-1 4 0l10 10q2 2 0 4L26 26q-2 2-4 0L12 16q-2-2 0-4z" fill="#858e99" /></svg>
              </NavIcon>
              <span>Organization</span>
            </NavItem>
          </Sidebar>

          <Main>
            <Welcome>
              <InfoSquare><svg width="21" height="21" viewBox="0 0 63 63"><rect x="1" y="1" width="61" height="61" rx="17" fill="#4676e8" /><path d="M31.500 28v20" stroke="#fff" strokeWidth="6" /><path d="M28 30h4" stroke="#fff" strokeWidth="4" /><circle cx="31" cy="18" r="4.500" fill="#fff" /></svg></InfoSquare>
              <WelcomeText>
                <strong>Welcome to the new Meraki dashboard experience!</strong>
                To find out more about the next generation of the Meraki dashboard, visit our new <a>Early Access Program page</a> for more information.
              </WelcomeText>
              <CloseWrap $top={7}>{cross(10, '#333', 1)}</CloseWrap>
            </Welcome>
            <Alert $h={58} $pad={10}>
              <p>Two-factor Authentication is not currently enabled on your Meraki Dashboard account. For an extra layer of security, we recommend <a>enabling it</a> at your earliest<br />convenience.</p>
              <CloseWrap $top={4}>{cross(10, '#a9a9a6', 1.3)}</CloseWrap>
            </Alert>
            <Alert $h={79} $pad={9}>
              <p><strong>Account recovery action needed</strong>You are the only administrator for this organization. If you lose access, you will need to contact support to recover access to this organization.<br /><a>Add another administrator to ensure you can recover access.</a></p>
              <CloseWrap $top={5}>{cross(10, '#a9a9a6', 1.3)}</CloseWrap>
            </Alert>
            <PageTitle>Create network</PageTitle>
            <Rule />
            <SectionTitle>Setup network</SectionTitle>
            <Copy>
              Networks provide a way to logically group, configure, and monitor devices. This is a useful way to<br />
              separate physically distinct sites within an Organization. <InfoDot />
            </Copy>
            <FieldRow $h={79}>
              <FieldLabel>Network name</FieldLabel>
              <TextInput defaultValue="Test-1" />
            </FieldRow>
            <FieldRow $h={60}>
              <FieldLabel>Network type</FieldLabel>
              <SelectButton>EMM (Systems manager)<svg width="8" height="4" viewBox="0 0 8 4"><path d="M0 0h8L4 4z" fill="#1e1e1e" /></svg></SelectButton>
              <InfoSlot><InfoDot /></InfoSlot>
            </FieldRow>
            <FieldRow $h={38}>
              <FieldLabel>Network<br />configuration</FieldLabel>
              <RadioOption>
                <Radio />
                <span>Default Meraki configuration</span>
              </RadioOption>
            </FieldRow>
          </Main>
        </Body>
        <DockShade />
      </BrowserWindow>

      <DockRow>
        <Rocks />
        <Dock />
        <Rocks flip />
      </DockRow>
    </Desktop>
  );
}
